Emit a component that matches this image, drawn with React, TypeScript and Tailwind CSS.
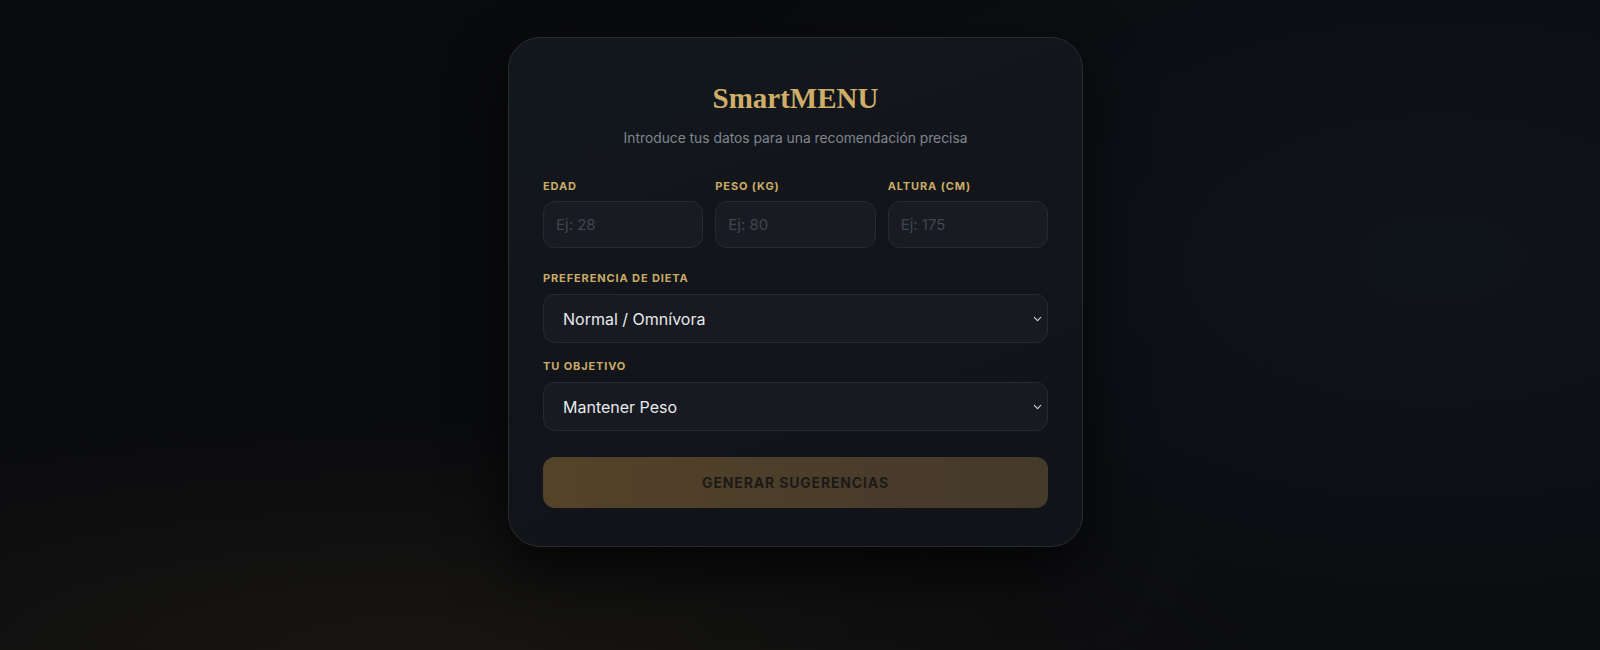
import { ChevronDown } from "lucide-react";

const SANS = "font-['Inter','Noto_Sans',sans-serif]";

function Label({ children }: { children: string }) {
  return (
    <label className={`block text-[11px] leading-4 font-bold uppercase tracking-[0.08em] text-[#cbab66] ${SANS}`}>
      {children}
    </label>
  );
}

function NumberField({ label, placeholder }: { label: string; placeholder: string }) {
  return (
    <div className="flex flex-col">
      <Label>{label}</Label>
      <input
        type="text"
        placeholder={placeholder}
        className={`mt-[7px] h-[47px] w-full rounded-xl border border-[#262a31] bg-[#181b21] px-[12px] text-[15px] text-[#e5e7eb] placeholder:text-[#40454d] outline-none ${SANS}`}
      />
    </div>
  );
}

function SelectField({ label, value, options }: { label: string; value: string; options: string[] }) {
  return (
    <div className="flex flex-col">
      <Label>{label}</Label>
      <div className="relative mt-2">
        <select
          defaultValue={value}
          className={`h-[49px] w-full appearance-none rounded-xl border border-[#262a31] bg-[#171a20] pl-[19px] pr-8 text-[16px] text-[#e8e9ec] outline-none ${SANS}`}
        >
          {options.map((o) => (
            <option key={o}>{o}</option>
          ))}
        </select>
        <ChevronDown className="pointer-events-none absolute right-[4px] top-1/2 h-[13px] w-[13px] -translate-y-1/2 text-[#d4d6da]" strokeWidth={2} />
      </div>
    </div>
  );
}

export default function App() {
  return (
    <div className="relative h-[650px] w-full overflow-hidden bg-[#0a0b0e] bg-[radial-gradient(ellipse_55%_35%_at_25%_100%,rgba(24,22,18,0.95),transparent),radial-gradient(ellipse_50%_70%_at_90%_40%,rgba(22,30,42,0.45),transparent)]">
      <div className="flex justify-center pt-[37px] pr-[9px]">
        <div className="w-[575px] rounded-[32px] border border-[#2b2c2d] bg-[#11151a] bg-[linear-gradient(160deg,#13181e,#101318)] px-[34px] pt-[42px] pb-[38px] shadow-[0_25px_60px_rgba(0,0,0,0.7)]">
          <h1 className="text-center font-['Liberation_Serif','Times_New_Roman',serif] text-[29px] leading-[36px] font-bold text-[#cfae68]">
            SmartMENU
          </h1>
          <p className={`mt-3 text-center text-[13.8px] leading-5 text-[#80858e] ${SANS}`}>
            Introduce tus datos para una recomendación precisa
          </p>

          <div className="mt-[30px] grid grid-cols-3 gap-3">
            <NumberField label="Edad" placeholder="Ej: 28" />
            <NumberField label="Peso (kg)" placeholder="Ej: 80" />
            <NumberField label="Altura (cm)" placeholder="Ej: 175" />
          </div>

          <div className="mt-[22px]">
            <SelectField
              label="Preferencia de dieta"
              value="Normal / Omnívora"
              options={["Normal / Omnívora", "Vegetariana", "Vegana", "Keto", "Sin gluten"]}
            />
          </div>

          <div className="mt-[15px]">
            <SelectField
              label="Tu objetivo"
              value="Mantener Peso"
              options={["Perder Peso", "Mantener Peso", "Ganar Masa Muscular"]}
            />
          </div>

          <button
            type="button"
            className={`mt-[26px] h-[51px] w-full rounded-xl bg-[linear-gradient(90deg,#554329,#4b3d2a_55%,#45392a)] text-[14px] font-bold uppercase tracking-[0.06em] text-[#1b1a18] ${SANS}`}
          >
            Generar Sugerencias
          </button>
        </div>
      </div>
    </div>
  );
}
